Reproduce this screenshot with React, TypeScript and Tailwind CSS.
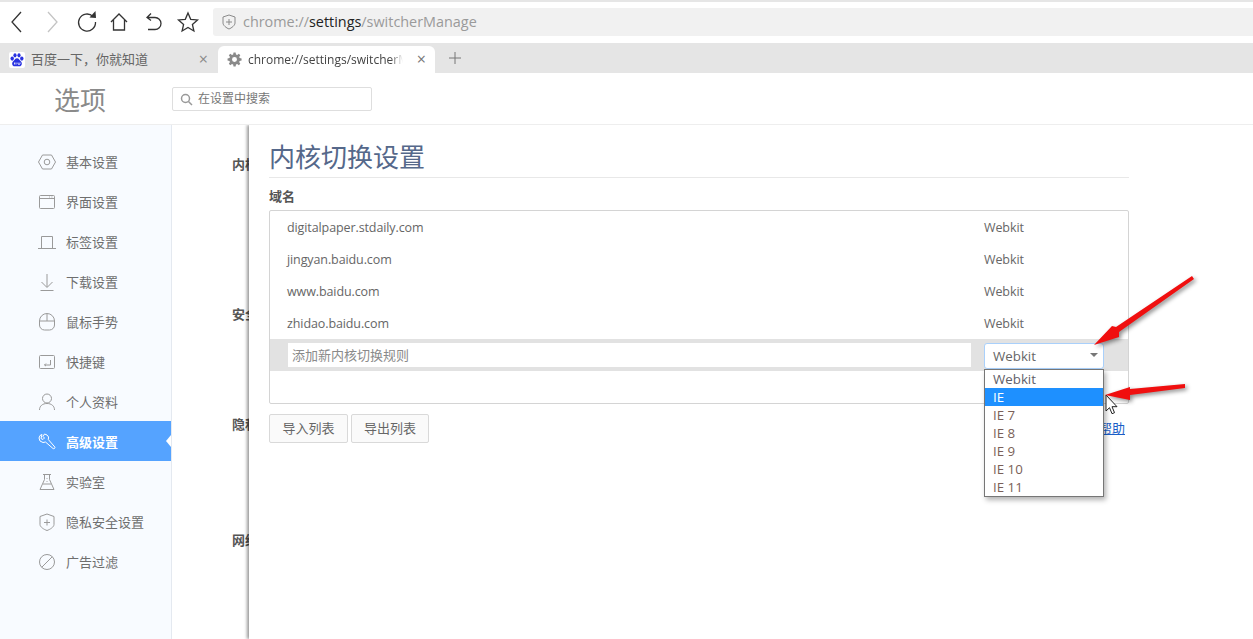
import { ReactNode } from "react";

const FONT = "font-['Open_Sans','Noto_Sans_CJK_SC',sans-serif]";

const Ic = ({ children }: { children: ReactNode }) => (
  <svg width="20" height="20" viewBox="0 0 20 20" fill="none" stroke="#9a9a9a" strokeWidth="1" className="shrink-0">
    {children}
  </svg>
);

const navItems: { label: string; icon: ReactNode; active?: boolean }[] = [
  {
    label: "基本设置",
    icon: (
      <Ic>
        <path d="M5.5 3h9l4 7-4 7h-9l-4-7z" />
        <circle cx="10" cy="10" r="2.800" />
      </Ic>
    ),
  },
  {
    label: "界面设置",
    icon: (
      <Ic>
        <rect x="2.500" y="3.500" width="15" height="13" rx="1" />
        <path d="M2.500 6.500h15M12 5h.8M14.500 5h.8" />
      </Ic>
    ),
  },
  {
    label: "标签设置",
    icon: (
      <Ic>
        <path d="M4.500 16V4.500h11V16M1 16.500h18" />
      </Ic>
    ),
  },
  {
    label: "下载设置",
    icon: (
      <Ic>
        <path d="M10 2v13M4.500 10l5.500 5.500 5.500-5.500M3.500 18.500h13" />
      </Ic>
    ),
  },
  {
    label: "鼠标手势",
    icon: (
      <Ic>
        <path d="M2.500 9a7 7 0 0 1 15 0v4a5 5 0 0 1-5 5h-5a5 5 0 0 1-5-5zM2.500 9h15M10 2v7" />
      </Ic>
    ),
  },
  {
    label: "快捷键",
    icon: (
      <Ic>
        <rect x="2.500" y="3.500" width="15" height="13" rx="1" />
        <path d="M13.500 8v5h-6M9 11.500l-1.500 1.500 1.500 1" />
      </Ic>
    ),
  },
  {
    label: "个人资料",
    icon: (
      <Ic>
        <circle cx="10" cy="6.500" r="4.500" />
        <path d="M2.500 18c0-4 3-6.500 7.500-6.500s7.500 2.500 7.500 6.500" />
      </Ic>
    ),
  },
  {
    label: "高级设置",
    active: true,
    icon: (
      <svg width="20" height="20" viewBox="0 0 20 20" fill="none" stroke="#fff" strokeWidth="1" className="shrink-0">
        <path d="M5 2.500 3 3.500l-1 2.500 1 3 3 1.500 2.500-.5 7.500 6.500c1 .8 2.500-.5 1.800-1.500l-6.500-7.500.3-2.500L10 3 7.500 2 6 4.500 7.500 6 6 7.500 4 6.500z" />
      </svg>
    ),
  },
  {
    label: "实验室",
    icon: (
      <Ic>
        <path d="M6 2.500h8M7.500 2.500v5L3 17.500h14L12.500 7.500v-5M6 12h8" />
        <path d="M10 6v.8M10 9v.8" />
      </Ic>
    ),
  },
  {
    label: "隐私安全设置",
    icon: (
      <Ic>
        <path d="M10 2l7 2.500v8c0 2.500-4 5-7 6-3-1-7-3.500-7-6v-8z" />
        <path d="M10 7.500v6M7 10.500h6" />
      </Ic>
    ),
  },
  {
    label: "广告过滤",
    icon: (
      <Ic>
        <circle cx="10" cy="10" r="7.500" />
        <path d="M4.700 15.300 15.300 4.700" />
      </Ic>
    ),
  },
];

const rows = ["digitalpaper.stdaily.com", "jingyan.baidu.com", "www.baidu.com", "zhidao.baidu.com"];
const options = ["Webkit", "IE", "IE 7", "IE 8", "IE 9", "IE 10", "IE 11"];

const Toolbar = () => (
  <div className="h-[43px] bg-white border-t-2 border-[#e6e6e6] flex items-center shrink-0">
    <div className="flex items-center w-[213px] shrink-0 h-full">
      <svg width="200" height="28" viewBox="0 0 200 28" fill="none" stroke="#333" strokeWidth="1.300" className="ml-[8px]">
        <path d="M13 3 4 13l9 10" />
        <path d="m40 3 9 10-9 10" stroke="#c4c4c4" />
        <path d="M85 7.500A8.500 8.500 0 1 0 87.500 13" />
        <path d="m87.500 2 .5 7-6.500-.5z" fill="#333" stroke="none" />
        <path d="M103 13l8-8 8 8M105.500 11v10h11V11" />
        <path d="M139 8.500h8a5 5 0 0 1 0 12h-7M143 4.500l-4 4 4 3" />
        <path d="m180 4 2.700 6.300 6.800.6-5.100 4.500 1.500 6.600-5.900-3.500-5.900 3.500 1.500-6.600-5.100-4.500 6.800-.6z" />
      </svg>
    </div>
    <div className="flex-1 h-[28px] mb-[1px] bg-[#f1f1f1] rounded-l-[3px] flex items-center pl-[9px]">
      <svg width="14" height="16" viewBox="0 0 14 16" fill="none" stroke="#8a8a8a" strokeWidth="1">
        <path d="M7 1l6 2v6c0 2.500-3.500 5-6 6-2.500-1-6-3.500-6-6V3z" />
        <path d="M7 5v6M4 8h6" />
      </svg>
      <span className="ml-[7px] text-[14.4px] text-[#9a9a9a]">
        chrome://<span className="text-[#222]">settings</span>/switcherManage
      </span>
    </div>
  </div>
);

const TabBar = () => (
  <div className="h-[30px] bg-[#e5e5e5] flex items-end shrink-0">
    <div className="w-[218px] h-[27px] flex items-center pl-[9px] pr-[10px] shrink-0">
      <svg width="16" height="16" viewBox="0 0 16 16" className="shrink-0">
        <rect width="16" height="16" rx="2" fill="#fff" />
        <g fill="#2932e1">
          <ellipse cx="3.200" cy="6.600" rx="1.700" ry="2.100" />
          <ellipse cx="6" cy="3.300" rx="1.600" ry="2.100" />
          <ellipse cx="10" cy="3.300" rx="1.600" ry="2.100" />
          <ellipse cx="12.800" cy="6.600" rx="1.700" ry="2.100" />
          <path d="M8 6.200c-2 0-2.500 2-4 3.200-1.700 1.500-.7 4.800 1.500 4.800h5c2.200 0 3.200-3.300 1.500-4.800-1.500-1.200-2-3.200-4-3.200z" />
        </g>
        <path d="M5.500 10.500v2M7 10.500v2M9 10.500v1.500q1 1 2 0v-1.500" stroke="#fff" strokeWidth="0.800" fill="none" />
      </svg>
      <span className="ml-[6px] text-[13px] text-[#666] flex-1 whitespace-nowrap">百度一下，你就知道</span>
      <span className="text-[16px] leading-none mb-[2px] text-[#8a8a8a]">×</span>
    </div>
    <div className="w-[217px] h-[27px] bg-white rounded-t-[6px] flex items-center pl-[8px] pr-[9px] shrink-0">
      <svg width="17" height="17" viewBox="0 0 24 24" fill="#8a8a8a" className="shrink-0">
        <path fillRule="evenodd" d="M21 13.500v-3l-2.700-.5a6.500 6.500 0 0 0-.7-1.700l1.600-2.300-2.100-2.100-2.300 1.600a6.500 6.500 0 0 0-1.700-.7L12.600 2h-3l-.5 2.800a6.500 6.500 0 0 0-1.700.7L5.100 3.900 3 6l1.600 2.300a6.500 6.500 0 0 0-.7 1.700L1.200 10.500v3l2.700.5a6.500 6.500 0 0 0 .7 1.700L3 18l2.100 2.100 2.300-1.600a6.500 6.500 0 0 0 1.700.7l.5 2.800h3l.5-2.800a6.500 6.500 0 0 0 1.700-.7l2.300 1.600L19.200 18l-1.600-2.300a6.500 6.500 0 0 0 .7-1.700zM11 15.500a3.500 3.500 0 1 1 0-7 3.500 3.500 0 0 1 0 7z" transform="translate(1 0)" />
      </svg>
      <span className="ml-[5px] text-[12px] text-[#444] w-[155px] overflow-hidden whitespace-nowrap [mask-image:linear-gradient(to_right,#000_92%,transparent)]">
        chrome://settings/switcherM
      </span>
      <span className="ml-auto text-[16px] leading-none mb-[2px] text-[#777]">×</span>
    </div>
    <span className="ml-[13px] mb-[8px] text-[#777]">
      <svg width="14" height="14" viewBox="0 0 14 14" stroke="currentColor" strokeWidth="1">
        <path d="M7 1v12M1 7h12" />
      </svg>
    </span>
  </div>
);

const Sidebar = () => (
  <aside className="w-[172px] shrink-0 bg-[#f8fbff] border-r border-[#e4e9f0] pt-[16px]">
    {navItems.map((item) => (
      <div
        key={item.label}
        className={
          item.active
            ? "relative h-[40px] flex items-center pl-[37px] pt-[1px] bg-[#55a3ff] text-white font-bold"
            : "relative h-[40px] flex items-center pl-[37px] pt-[1px] text-[#6e6e6e]"
        }
      >
        {item.icon}
        <span className="ml-[9px] text-[13px] pt-[2px]">{item.label}</span>
        {item.active && (
          <span className="absolute right-0 top-[14px] w-0 h-0 border-y-[6px] border-y-transparent border-r-[5px] border-r-white" />
        )}
      </div>
    ))}
  </aside>
);

const Dialog = () => (
  <div className="absolute left-[249px] top-0 bottom-0 right-0 bg-white shadow-[-2px_0_3px_rgba(0,0,0,0.4)] pl-[20px] pt-[14px] pr-[124px]">
    <h1 className="text-[26px] leading-[36px] h-[39px] text-[#55688a] border-b border-[#e8e8e8]">内核切换设置</h1>
    <div className="mt-[9px] text-[13px] leading-[18px] font-bold text-[#555]">域名</div>
    <div className="mt-[5px] h-[194px] border border-[#d4d4d4] rounded-[2px]">
      {rows.map((r) => (
        <div key={r} className="h-[32px] flex items-center pl-[17px] pt-[2px] text-[12.5px] tracking-[-0.1px] text-[#666]">
          <span className="w-[697px]">{r}</span>
          <span>Webkit</span>
        </div>
      ))}
      <div className="h-[32px] bg-[#e2e2e2] flex items-start pt-[4px] pl-[18px]">
        <div className="w-[683px] h-[24px] bg-white text-[13px] leading-[24px] pl-[4px] text-[#8a8a8a]">添加新内核切换规则</div>
        <div className="relative ml-[13px] w-[120px] h-[26px] bg-white border border-[#a9d0fb] rounded-[3px] text-[13.3px] leading-[24px] pl-[8px] text-[#666]">
          Webkit
          <span className="absolute right-[5px] top-[9px] w-0 h-0 border-x-[4px] border-x-transparent border-t-[4px] border-t-[#777]" />
        </div>
      </div>
    </div>
    <div className="mt-[10px] flex gap-[3px] items-center">
      <button className="w-[79px] h-[29px] border border-[#d9d9d9] rounded-[2px] bg-[#fafafa] text-[13px] text-[#666]">导入列表</button>
      <button className="w-[78px] h-[29px] border border-[#d9d9d9] rounded-[2px] bg-[#fafafa] text-[13px] text-[#666]">导出列表</button>
      <a className="ml-auto mr-[4px] text-[13px] text-[#1a5fc8] underline">帮助</a>
    </div>
  </div>
);

const Dropdown = () => (
  <div className="absolute left-[984px] top-[369px] w-[120px] h-[128px] bg-white border border-[#767676] shadow-[2px_3px_5px_rgba(0,0,0,0.3)]">
    {options.map((o) => (
      <div
        key={o}
        className={
          o === "IE"
            ? "h-[18px] pl-[8px] text-[13.3px] leading-[18px] bg-[#1e90ff] text-white"
            : o === "Webkit"
              ? "h-[18px] pl-[8px] text-[13.3px] leading-[18px] text-[#5f6068]"
              : "h-[18px] pl-[8px] text-[13.3px] leading-[18px] text-[#7a5f58]"
        }
      >
        {o}
      </div>
    ))}
  </div>
);

const Annotations = () => (
  <svg className="absolute left-[1080px] top-[270px]" width="130" height="150" viewBox="0 0 130 150" fill="none">
    <path d="M26 125v16l3.500-3.300 2.500 6 2.500-1-2.500-6h5z" fill="#fff" stroke="#222" strokeWidth="1" />
    <g fill="#f00f0f" className="[filter:drop-shadow(2px_2px_2px_rgba(0,0,0,0.45))]">
      <path d="M112 6 36 57l-4-1-18 19 25-8 0-5L114 9z" />
      <path d="M105 114 50 119l0-2-25 8 25 5 0-5 55-7z" />
    </g>
  </svg>
);

export default function App() {
  return (
    <div className={`${FONT} relative w-[1253px] h-[639px] overflow-hidden bg-white flex flex-col`}>
      <Toolbar />
      <TabBar />
      <div className="h-[52px] shrink-0 border-b border-[#eeeeee] flex items-center">
        <div className="w-[172px] pl-[54px] pt-[4px] text-[26px] text-[#8a8a8a] shrink-0">选项</div>
        <div className="w-[200px] h-[24px] border border-[#dedede] rounded-[2px] flex items-center pl-[7px] pt-[1px] text-[12px] text-[#777]">
          <svg width="13" height="13" viewBox="0 0 13 13" fill="none" stroke="#999" strokeWidth="1.500">
            <circle cx="5.500" cy="5.500" r="4" />
            <path d="m8.500 8.500 3.500 3.500" />
          </svg>
          <span className="ml-[5px]">在设置中搜索</span>
        </div>
      </div>
      <div className="flex-1 flex relative min-h-0 overflow-hidden">
        <Sidebar />
        <div className="flex-1 relative text-[13px] font-bold text-[#555]">
          <span className="absolute left-[60px] top-[30px]">内核</span>
          <span className="absolute left-[60px] top-[180px]">安全</span>
          <span className="absolute left-[60px] top-[290px]">隐私</span>
          <span className="absolute left-[60px] top-[406px]">网络</span>
        </div>
        <Dialog />
      </div>
      <Dropdown />
      <Annotations />
    </div>
  );
}
